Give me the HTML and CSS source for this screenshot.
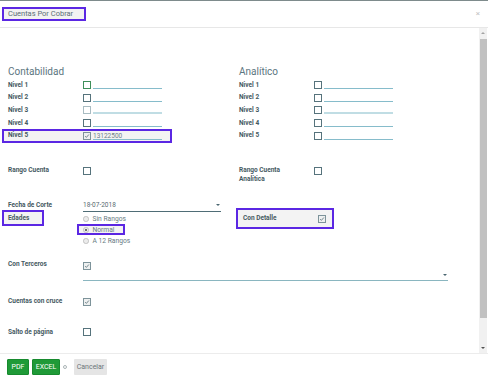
FILE: index.html
```html
<!DOCTYPE html>
<html lang="es">
<head>
  <meta charset="UTF-8">
  <meta name="viewport" content="width=device-width, initial-scale=1">
  <title>Cuentas Por Cobrar</title>
  <link rel="stylesheet" href="styles.css">
</head>
<body>
  <div class="topline"></div>
  <header class="head">
    <h1 class="title">Cuentas Por Cobrar</h1>
    <span class="close">&times;</span>
  </header>

  <div class="main">
    <div class="sheet">

      <div class="section levels">
        <div class="group">
          <h2>Contabilidad</h2>
          <div class="row"><span class="lbl">Nivel 1</span><span class="cb focus"></span><span class="line"></span></div>
          <div class="row"><span class="lbl">Nivel 2</span><span class="cb"></span><span class="line"></span></div>
          <div class="row"><span class="lbl">Nivel 3</span><span class="cb hover"></span><span class="line hover"></span></div>
          <div class="row"><span class="lbl">Nivel 4</span><span class="cb"></span><span class="line"></span></div>
          <div class="row marked"><span class="lbl">Nivel 5</span><span class="cb checked"><svg viewBox="0 0 8 8"><polyline points="1.5,4.2 3.2,5.8 6.5,2"/></svg></span><span class="line">13122500</span></div>
        </div>
        <div class="group">
          <h2>Analítico</h2>
          <div class="row"><span class="lbl">Nivel 1</span><span class="cb"></span><span class="line"></span></div>
          <div class="row"><span class="lbl">Nivel 2</span><span class="cb"></span><span class="line"></span></div>
          <div class="row"><span class="lbl">Nivel 3</span><span class="cb"></span><span class="line hover"></span></div>
          <div class="row"><span class="lbl">Nivel 4</span><span class="cb"></span><span class="line"></span></div>
          <div class="row"><span class="lbl">Nivel 5</span><span class="cb"></span><span class="line"></span></div>
        </div>
      </div>

      <div class="section ranges">
        <div class="group">
          <div class="row top"><span class="lbl">Rango Cuenta</span><span class="cb"></span></div>
        </div>
        <div class="group">
          <div class="row top"><span class="lbl">Rango Cuenta<br>Analítica</span><span class="cb"></span></div>
        </div>
      </div>

      <div class="section dates">
        <div class="group">
          <div class="row top">
            <span class="lbl">Fecha de Corte</span>
            <span class="date"><span>18-07-2018</span><span class="caret"></span></span>
          </div>
          <div class="row top">
            <span class="lbl"><span class="mark edades">Edades</span></span>
            <div class="radios">
              <div class="radio"><span class="dot"></span>Sin Rangos</div>
              <div class="radio mark picked"><span class="dot on"></span>Normal</div>
              <div class="radio"><span class="dot"></span>A 12 Rangos</div>
            </div>
          </div>
        </div>
        <div class="group">
          <div class="mark detail">
            <span class="lbl">Con Detalle</span>
            <span class="cb checked"><svg viewBox="0 0 8 8"><polyline points="1.5,4.2 3.2,5.8 6.5,2"/></svg></span>
          </div>
        </div>
      </div>

      <div class="row top terceros">
        <span class="lbl">Con Terceros</span>
        <div class="field">
          <span class="cb checked"><svg viewBox="0 0 8 8"><polyline points="1.5,4.2 3.2,5.8 6.5,2"/></svg></span>
          <div class="select"><span class="caret"></span></div>
        </div>
      </div>

      <div class="row plain cruce">
        <span class="lbl">Cuentas con cruce</span>
        <span class="cb checked"><svg viewBox="0 0 8 8"><polyline points="1.5,4.2 3.2,5.8 6.5,2"/></svg></span>
      </div>

      <div class="row plain salto">
        <span class="lbl">Salto de página</span>
        <span class="cb"></span>
      </div>

    </div>

    <div class="scrollbar">
      <span class="arrow up"></span>
      <span class="thumb"></span>
      <span class="track"></span>
      <span class="arrow down"></span>
    </div>
  </div>

  <footer class="foot">
    <button class="btn green pdf">PDF</button>
    <button class="btn green excel">EXCEL</button>
    <span class="spin"></span>
    <button class="btn grey">Cancelar</button>
  </footer>
</body>
</html>
```

FILE: styles.css
```css
* {
  box-sizing: border-box;
}

body {
  margin: 0;
  font-family: Roboto, "Liberation Sans", sans-serif;
  background-color: #fff;
  color: #465a62;
  overflow: hidden;
}

.topline {
  height: 1px;
  background-color: #7e8b8c;
}

.head {
  height: 27px;
  display: flex;
  align-items: center;
  justify-content: space-between;
  padding: 0 8px 0 2px;
  border-bottom: 1px solid #e7e7e7;
}

.title {
  margin: 0;
  width: 84px;
  height: 14px;
  padding-left: 4px;
  font-size: 7.5px;
  font-weight: 400;
  line-height: 10px;
  color: #5a6f76;
  background-color: #f2f2f2;
  border: 2px solid #5b27e3;
}

.close {
  font-size: 8px;
  color: #c4c4c4;
  line-height: 8px;
}

.main {
  height: 325px;
  display: flex;
}

.sheet {
  flex: 1;
  padding: 38px 0 0 8px;
  overflow: hidden;
}

/* sections with two columns */
.section {
  display: flex;
}

.group {
  width: 231px;
}

h2 {
  margin: 0 0 1px;
  font-size: 10px;
  font-weight: 400;
  line-height: 12px;
  color: #5b7580;
}

.row {
  display: flex;
  align-items: center;
  height: 12.6px;
}

.row.top {
  align-items: flex-start;
  height: auto;
}

.row.plain {
  height: 10px;
}

.lbl {
  width: 75px;
  flex: none;
  font-size: 6.5px;
  font-weight: 700;
  line-height: 9px;
  color: #465a62;
}

.cb {
  display: block;
  width: 8px;
  height: 8px;
  flex: none;
  border: 1px solid #56737c;
  background-color: #fff;
}

.row.top > .cb {
  margin-top: 1.3px;
}

.cb.focus {
  border: 1.3px solid #3e8f5a;
}

.cb.hover {
  border-color: #a9bcc2;
}

.cb.checked {
  background-color: #eef0f0;
  border-color: #7d939a;
}

.cb svg {
  display: block;
  width: 6px;
  height: 6px;
  fill: none;
  stroke: #4e666e;
  stroke-width: 1;
}

.line {
  width: 69px;
  height: 8px;
  margin-left: 2px;
  border-bottom: 1px solid #86bccb;
  font-size: 6.5px;
  line-height: 8px;
  color: #6f8088;
}

.line.hover {
  border-bottom: 2px solid #c0dde4;
}

/* purple review marks */
.mark {
  background-color: #f3f3f3;
  box-shadow: inset 0 0 0 2px #5b27e3;
}

.row.marked {
  margin-left: -6px;
  padding-left: 6px;
  width: 170px;
  background-color: #f3f3f3;
  box-shadow: inset 0 0 0 2px #5b27e3;
  height: 14px;
  margin-top: -0.7px;
}

.ranges {
  margin-top: 23.3px;
}

.dates {
  margin-top: 17px;
}

.date {
  width: 138px;
  display: flex;
  justify-content: space-between;
  align-items: center;
  padding-bottom: 1px;
  border-bottom: 1.5px solid #4f6d76;
  font-size: 6.5px;
  line-height: 9px;
  color: #56696f;
}

.caret {
  width: 0;
  height: 0;
  margin-right: 1px;
  border-left: 2px solid transparent;
  border-right: 2px solid transparent;
  border-top: 2.5px solid #4a6670;
}

.edades {
  display: block;
  width: 42px;
  height: 16px;
  margin: -2px 0 0 -6px;
  padding-left: 6px;
  line-height: 16px;
}

.radios {
  display: flex;
  flex-direction: column;
  margin-top: 1.5px;
}

.radio {
  display: flex;
  align-items: center;
  gap: 4px;
  height: 11px;
  font-size: 6.7px;
  color: #687b82;
}

.radio.picked {
  width: 48px;
  margin-left: -6px;
  padding-left: 6px;
}

.dot {
  width: 5.5px;
  height: 5.5px;
  border-radius: 50%;
  border: 1px solid #c2c2c2;
  background-color: #ececec;
}

.dot.on {
  background: radial-gradient(circle, #6f6f6f 0 1px, #ececec 1.3px);
}

.detail {
  display: flex;
  align-items: center;
  width: 98px;
  height: 21px;
  margin: 7.5px 0 0 -3px;
  padding-left: 7px;
}

.terceros {
  margin-top: 14px;
}

.field {
  width: 365px;
}

.field .cb {
  margin-top: 1.5px;
}

.select {
  height: 11px;
  display: flex;
  justify-content: flex-end;
  align-items: flex-end;
  padding-bottom: 4px;
  border-bottom: 1px solid #8ab6c0;
}

.cruce {
  margin-top: 15.7px;
}

.salto {
  margin-top: 20.8px;
}

/* fake scrollbar of the dialog body */
.scrollbar {
  width: 8px;
  margin-right: 1px;
  display: flex;
  flex-direction: column;
  align-items: center;
  background-color: #f1f1f1;
}

.arrow {
  width: 0;
  height: 0;
  border-left: 2.5px solid transparent;
  border-right: 2.5px solid transparent;
}

.arrow.up {
  margin: 4px 0 5px;
  border-bottom: 2px solid #a3a3a3;
}

.arrow.down {
  margin: 0 0 4px;
  border-top: 2.5px solid #505050;
}

.thumb {
  width: 7px;
  height: 279px;
  background-color: #c1c1c1;
}

.track {
  flex: 1;
}

.foot {
  height: 28px;
  display: flex;
  align-items: flex-start;
  gap: 3px;
  padding: 5px 7px 0;
  border-top: 1px solid #ececec;
}

.btn {
  height: 16px;
  padding: 0;
  border: none;
  border-radius: 1px;
  font-family: Roboto, "Liberation Sans", sans-serif;
  font-size: 7px;
  cursor: pointer;
}

.green {
  background-color: #1f9a37;
  border: 1px solid #178a2e;
  color: #fff;
}

.pdf {
  width: 22px;
}

.excel {
  width: 28px;
}

.spin {
  width: 4px;
  height: 4px;
  margin: 6px 4px 0 0;
  border: 1px solid #aab4b6;
  border-radius: 50%;
}

.grey {
  width: 33px;
  background-color: #e5e5e5;
  color: #6c7579;
}
```
